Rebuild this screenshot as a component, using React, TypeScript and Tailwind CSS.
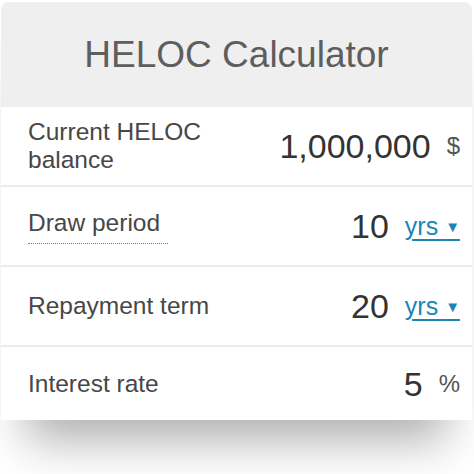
import React from "react";

const font = { fontFamily: '"Liberation Sans", Arial, Helvetica, sans-serif' };

function Unit({ children, link }: { children: React.ReactNode; link?: boolean }) {
  if (link) {
    return (
      <span className="text-[25px] leading-none text-[#1a85b8] underline decoration-[1.5px] underline-offset-[4px]">
        yrs <span className="text-[15px] align-[3px]">▼</span>
      </span>
    );
  }
  return <span className="text-[24px] leading-none text-[#555555]">{children}</span>;
}

function Row({
  label,
  value,
  unit,
  link,
  dotted,
  last,
}: {
  label: React.ReactNode;
  value: string;
  unit?: string;
  link?: boolean;
  dotted?: boolean;
  last?: boolean;
}) {
  return (
    <div
      className={`flex items-center justify-between bg-white pl-[27px] pr-[12px] ${
        last ? "h-[73px]" : "h-[80px] border-b-2 border-[#ececec]"
      }`}
    >
      <div className="w-[220px] text-[24.5px] leading-[28px] text-[#474747]">
        {dotted ? (
          <span className="inline-block border-b border-dotted border-[#777777] pr-[8px] pb-[8px] leading-[24px]">
            {label}
          </span>
        ) : (
          label
        )}
      </div>
      <div className="flex items-center gap-4">
        <span className="text-[34px] leading-none text-[#333333]">{value}</span>
        <Unit link={link}>{unit}</Unit>
      </div>
    </div>
  );
}

export default function App() {
  return (
    <div className="min-h-[474px] w-[474px] bg-white pt-[2px]" style={font}>
      <div className="ml-[1px] w-[471px] rounded-t-lg shadow-[0_45px_45px_-25px_rgba(0,0,0,0.32)]">
        <div className="flex h-[105px] items-center justify-center rounded-t-lg bg-[#efefef]">
          <h1 className="text-[37px] font-normal leading-none text-[#5e5e5e]">HELOC Calculator</h1>
        </div>
        <Row
          label={
            <>
              Current HELOC
              <br />
              balance
            </>
          }
          value="1,000,000"
          unit="$"
        />
        <Row label="Draw period" value="10" link dotted />
        <Row label="Repayment term" value="20" link />
        <Row label="Interest rate" value="5" unit="%" last />
      </div>
    </div>
  );
}
